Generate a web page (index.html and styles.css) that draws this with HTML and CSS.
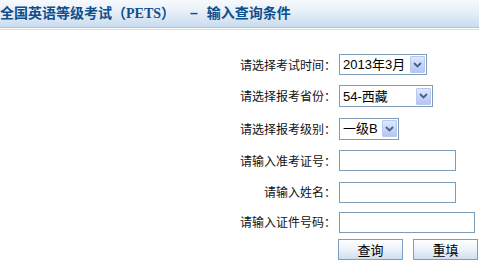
FILE: index.html
```html
<!DOCTYPE html>
<html lang="zh">
<head>
<meta charset="utf-8">
<title>全国英语等级考试（PETS） - 输入查询条件</title>
<link rel="stylesheet" href="styles.css">
</head>
<body>
<div class="header">
  <h1 class="title">全国英语等级考试（PETS）<span class="dash">–</span>输入查询条件</h1>
</div>
<div class="rule"></div>
<form class="form">
  <label class="label">请选择考试时间：</label>
  <div class="control"><span class="select sel-time"><span class="val">2013年3月</span><span class="arrow"><svg width="9" height="6" viewBox="0 0 9 6"><path d="M1 1 L4.5 4.5 L8 1" fill="none" stroke="#4a5f8a" stroke-width="1.8"/></svg></span></span></div>

  <label class="label">请选择报考省份：</label>
  <div class="control"><span class="select sel-prov"><span class="val">54-西藏</span><span class="arrow"><svg width="9" height="6" viewBox="0 0 9 6"><path d="M1 1 L4.5 4.5 L8 1" fill="none" stroke="#4a5f8a" stroke-width="1.8"/></svg></span></span></div>

  <label class="label">请选择报考级别：</label>
  <div class="control"><span class="select sel-level"><span class="val">一级B</span><span class="arrow"><svg width="9" height="6" viewBox="0 0 9 6"><path d="M1 1 L4.5 4.5 L8 1" fill="none" stroke="#4a5f8a" stroke-width="1.8"/></svg></span></span></div>

  <label class="label">请输入准考证号：</label>
  <div class="control"><input class="input" type="text"></div>

  <label class="label">请输入姓名：</label>
  <div class="control"><input class="input" type="text"></div>

  <label class="label">请输入证件号码：</label>
  <div class="control"><input class="input input-wide" type="text"></div>

  <span class="label"></span>
  <div class="control buttons"><button type="button" class="btn">查询</button><button type="button" class="btn">重填</button></div>
</form>
</body>
</html>
```
FILE: styles.css
```css
html, body {
  margin: 0;
  padding: 0;
  background: #ffffff;
}
body {
  width: 479px;
  height: 270px;
  overflow: hidden;
  font-family: "Noto Sans CJK SC", sans-serif;
  color: #000;
}
.header {
  height: 27px;
  background: linear-gradient(to bottom, #f7fafd 0%, #e6eff8 45%, #c9dcef 100%);
  border-bottom: 1px solid #a9c1da;
  display: flex;
  align-items: center;
}
.title {
  margin: 0;
  padding-left: 0;
  font-family: "Liberation Serif", "Noto Sans CJK SC", serif;
  font-weight: bold;
  font-size: 14px;
  line-height: 16px;
  color: #0e4f8e;
  white-space: nowrap;
}
.dash {
  display: inline-block;
  margin: 0 9px 0 15px;
  font-family: "Liberation Sans", sans-serif;
}
.rule {
  margin-top: 1px;
  height: 1px;
  background: #d4dde6;
}
.form {
  margin-top: 19px;
  display: grid;
  grid-template-columns: 336px auto;
  grid-template-rows: 31px 32px 33px 31px 32px 28px 27px;
  column-gap: 3px;
  align-items: center;
}
.label {
  justify-self: end;
  font-size: 12px;
  line-height: 14px;
  white-space: nowrap;
  color: #111;
}
.control {
  display: flex;
  align-items: center;
}
.select {
  box-sizing: border-box;
  display: flex;
  align-items: center;
  justify-content: space-between;
  height: 21px;
  border: 1px solid #7f9db9;
  background: #fff;
  padding: 1px 1px 1px 3px;
  font-family: "Liberation Sans", "Noto Sans CJK SC", sans-serif;
  font-size: 13px;
  color: #000;
}
.sel-time { width: 88px; }
.sel-prov { width: 94px; height: 22px; }
.sel-level { width: 60px; height: 22px; }
.val {
  line-height: 15px;
  white-space: nowrap;
}
.arrow {
  box-sizing: border-box;
  width: 15px;
  height: 17px;
  border: 1px solid #b7c9ef;
  border-radius: 1px;
  background: linear-gradient(to bottom, #dfe8fd 0%, #c3d3f8 60%, #b3c6f3 100%);
  display: flex;
  align-items: center;
  justify-content: center;
}
.input {
  box-sizing: border-box;
  width: 117px;
  height: 21px;
  margin: 0;
  padding: 0 2px;
  border: 1px solid #7f9db9;
  background: #fff;
  outline: none;
}
.input-wide { width: 136px; }
.buttons {
  gap: 10px;
  margin-left: -1px;
}
.btn {
  box-sizing: border-box;
  width: 65px;
  height: 21px;
  margin: 0;
  padding: 0;
  border: 1px solid #7b9ec4;
  background: linear-gradient(to bottom, #ffffff 0%, #eef4fb 45%, #cfdff0 100%);
  font-family: "Noto Sans CJK SC", sans-serif;
  font-size: 13px;
  line-height: 17px;
  color: #000;
  cursor: pointer;
}
```
